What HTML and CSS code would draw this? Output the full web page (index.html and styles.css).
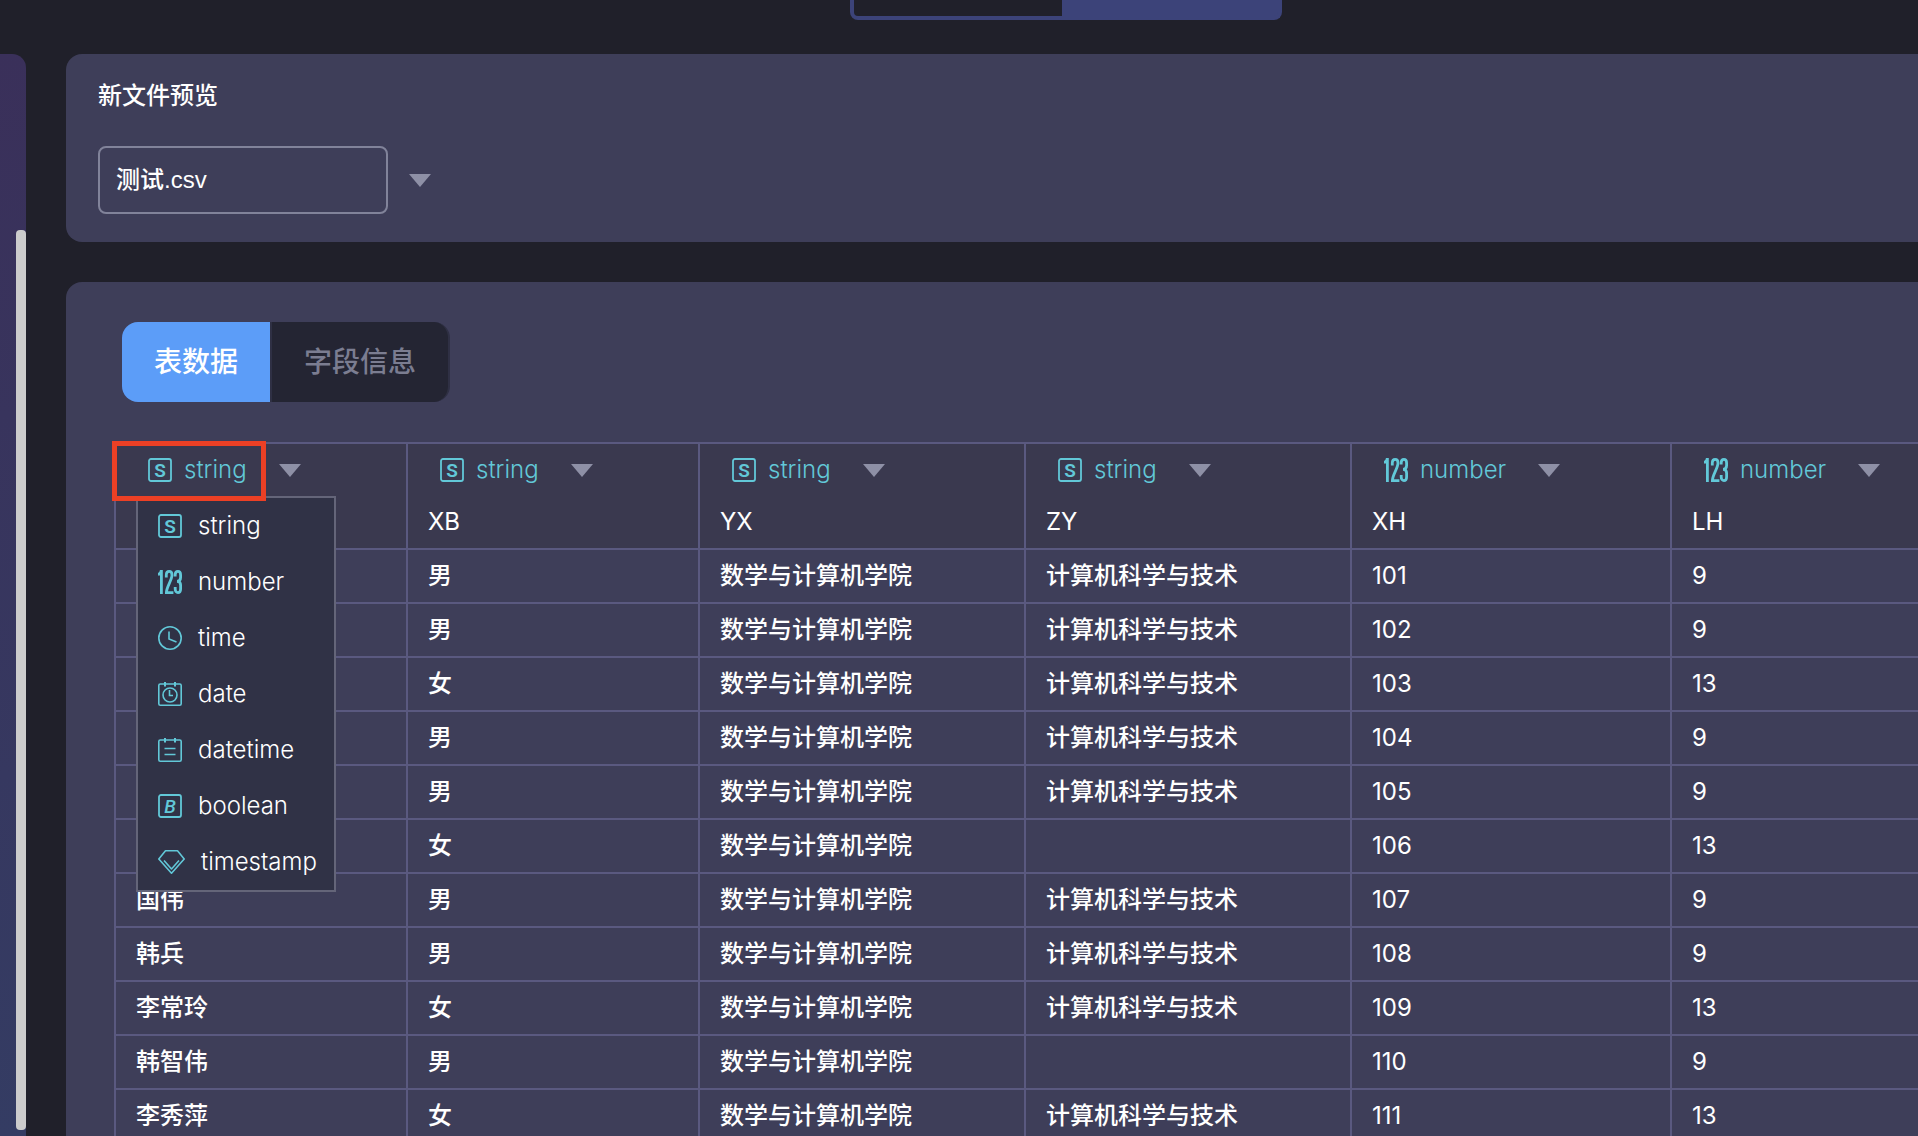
FILE: index.html
```html
<!DOCTYPE html>
<html lang="zh-CN">
<head>
<meta charset="utf-8">
<title>新文件预览</title>
<link rel="stylesheet" href="styles.css">
</head>
<body>
<svg class="sprite" aria-hidden="true">
  <symbol id="i-string" viewBox="0 0 24 24">
    <rect x="1" y="1" width="22" height="22" rx="2" fill="none" stroke="currentColor" stroke-width="1.800"/>
    <text x="12" y="19" text-anchor="middle" class="icon-letter">S</text>
  </symbol>
  <symbol id="i-number" viewBox="0 0 24 24">
    <g fill="none" stroke="currentColor" stroke-width="2.800">
      <path d="M0 4.400C2 4 3 3 3.400 0V24"/>
      <path d="M8.300 7.500V5C8.300 .2 14 .2 14 5c0 5-5.600 12-5.600 17.600h7"/>
      <path d="M17.200 6.500V5c0-4.800 5.400-4.800 5.400 0v2.500c0 2.500-1.200 3.800-3.600 3.800c2.400 0 3.600 1.300 3.600 3.800V19c0 4.800-5.400 4.800-5.400 0v-2"/>
    </g>
  </symbol>
  <symbol id="i-time" viewBox="0 0 24 24">
    <circle cx="12" cy="12" r="11.200" fill="none" stroke="currentColor" stroke-width="1.600"/>
    <path d="M11 5.500V13l7.500 3" fill="none" stroke="currentColor" stroke-width="1.600"/>
  </symbol>
  <symbol id="i-date" viewBox="0 0 24 24">
    <g fill="none" stroke="currentColor" stroke-width="1.600">
      <rect x=".8" y="2" width="22.400" height="21.200" rx="1.500"/>
      <path d="M7 0v4.500M17 0v4.500" stroke-width="2"/>
      <circle cx="12" cy="13" r="7"/>
      <path d="M11.500 8v5.500H15"/>
    </g>
  </symbol>
  <symbol id="i-datetime" viewBox="0 0 24 24">
    <g fill="none" stroke="currentColor" stroke-width="1.600">
      <rect x=".8" y="2" width="22.400" height="21.200" rx="1.500"/>
      <path d="M7 0v4.500M17 0v4.500" stroke-width="2"/>
      <path d="M6.500 10.500h11M6.500 16.500h11"/>
    </g>
  </symbol>
  <symbol id="i-boolean" viewBox="0 0 24 24">
    <rect x="1" y="1" width="22" height="22" rx="2" fill="none" stroke="currentColor" stroke-width="1.800"/>
    <text x="12" y="19" text-anchor="middle" class="icon-letter icon-letter-b">B</text>
  </symbol>
  <symbol id="i-timestamp" viewBox="0 0 27 24">
    <g fill="none" stroke="currentColor" stroke-width="1.600" stroke-linejoin="round">
      <path d="M7.500 .8h12L26.200 9 13.500 23.200.8 9z"/>
      <path d="M6 10.500l7.500 8.500L21 10.500"/>
    </g>
  </symbol>
  <symbol id="i-caret" viewBox="0 0 22 13"><path d="M0 0h22L11 13z" fill="currentColor"/></symbol>
</svg>

<aside class="side"><div class="side-thumb"></div></aside>

<main class="main">
  <div class="switch-row">
    <div class="switch"><span class="switch-off"></span><span class="switch-on"></span></div>
  </div>

  <section class="card file-card">
    <h1 class="card-title"><label for="file">新文件预览</label></h1>
    <div class="file-row">
      <select id="file" class="file-select"><option>测试.csv</option></select>
      <svg class="caret" aria-hidden="true"><use href="#i-caret"/></svg>
    </div>
  </section>

  <section class="card data-card">
    <div class="tabs" role="tablist">
      <button class="tab tab-active" role="tab" aria-selected="true">表数据</button>
      <button class="tab" role="tab" aria-selected="false">字段信息</button>
    </div>
    <table class="grid">
      <colgroup><col class="c-s"><col class="c-s"><col class="c-m"><col class="c-m"><col class="c-n"><col class="c-n"></colgroup>
      <thead>
        <tr>
          <th>
            <button class="type"><svg class="icon"><use href="#i-string"/></svg><span>string</span><svg class="caret"><use href="#i-caret"/></svg></button>
            <ul class="menu">
              <li><button class="menu-item"><svg class="icon"><use href="#i-string"/></svg>string</button></li>
              <li><button class="menu-item"><svg class="icon"><use href="#i-number"/></svg>number</button></li>
              <li><button class="menu-item"><svg class="icon"><use href="#i-time"/></svg>time</button></li>
              <li><button class="menu-item"><svg class="icon"><use href="#i-date"/></svg>date</button></li>
              <li><button class="menu-item"><svg class="icon"><use href="#i-datetime"/></svg>datetime</button></li>
              <li><button class="menu-item"><svg class="icon"><use href="#i-boolean"/></svg>boolean</button></li>
              <li><button class="menu-item"><svg class="icon icon-wide"><use href="#i-timestamp"/></svg>timestamp</button></li>
            </ul>
            <span class="marker"></span>
          </th>
          <th><button class="type"><svg class="icon"><use href="#i-string"/></svg><span>string</span><svg class="caret"><use href="#i-caret"/></svg></button><div class="name">XB</div></th>
          <th><button class="type"><svg class="icon"><use href="#i-string"/></svg><span>string</span><svg class="caret"><use href="#i-caret"/></svg></button><div class="name">YX</div></th>
          <th><button class="type"><svg class="icon"><use href="#i-string"/></svg><span>string</span><svg class="caret"><use href="#i-caret"/></svg></button><div class="name">ZY</div></th>
          <th><button class="type"><svg class="icon"><use href="#i-number"/></svg><span>number</span><svg class="caret"><use href="#i-caret"/></svg></button><div class="name">XH</div></th>
          <th><button class="type"><svg class="icon"><use href="#i-number"/></svg><span>number</span><svg class="caret"><use href="#i-caret"/></svg></button><div class="name">LH</div></th>
        </tr>
      </thead>
      <tbody>
        <tr><td></td><td>男</td><td>数学与计算机学院</td><td>计算机科学与技术</td><td>101</td><td>9</td></tr>
        <tr><td></td><td>男</td><td>数学与计算机学院</td><td>计算机科学与技术</td><td>102</td><td>9</td></tr>
        <tr><td></td><td>女</td><td>数学与计算机学院</td><td>计算机科学与技术</td><td>103</td><td>13</td></tr>
        <tr><td></td><td>男</td><td>数学与计算机学院</td><td>计算机科学与技术</td><td>104</td><td>9</td></tr>
        <tr><td></td><td>男</td><td>数学与计算机学院</td><td>计算机科学与技术</td><td>105</td><td>9</td></tr>
        <tr><td></td><td>女</td><td>数学与计算机学院</td><td></td><td>106</td><td>13</td></tr>
        <tr><td>国伟</td><td>男</td><td>数学与计算机学院</td><td>计算机科学与技术</td><td>107</td><td>9</td></tr>
        <tr><td>韩兵</td><td>男</td><td>数学与计算机学院</td><td>计算机科学与技术</td><td>108</td><td>9</td></tr>
        <tr><td>李常玲</td><td>女</td><td>数学与计算机学院</td><td>计算机科学与技术</td><td>109</td><td>13</td></tr>
        <tr><td>韩智伟</td><td>男</td><td>数学与计算机学院</td><td></td><td>110</td><td>9</td></tr>
        <tr><td>李秀萍</td><td>女</td><td>数学与计算机学院</td><td>计算机科学与技术</td><td>111</td><td>13</td></tr>
      </tbody>
    </table>
  </section>
</main>
</body>
</html>
```
FILE: styles.css
```css
* { box-sizing: border-box; }

body {
  margin: 0;
  height: 100vh;
  overflow: hidden;
  display: flex;
  gap: 40px;
  background: #20202a;
  color: #fff;
  font: 400 24px/32px Inter, "Noto Sans CJK SC", sans-serif;
}

button, select { font: inherit; color: inherit; }

button {
  padding: 0;
  border: 0;
  background: none;
  cursor: pointer;
}

.sprite { display: none; }

.icon-letter { font: 600 19px Roboto, sans-serif; fill: currentColor; }
.icon-letter-b { font: italic 500 19px Roboto, sans-serif; }

/* Left panel edge with its scrollbar */
.side {
  flex: none;
  display: flex;
  justify-content: flex-end;
  width: 26px;
  margin-top: 54px;
  padding: 176px 0 6px;
  border-radius: 0 14px 0 0;
  background: linear-gradient(#3a305a, #343c63);
}

.side-thumb { width: 10px; border-radius: 4px; background: #ccc; }

.main { flex: 1; min-width: 0; }

/* View switch */
.switch-row {
  display: flex;
  justify-content: center;
  height: 54px;
  padding-left: 148px;
}

.switch {
  display: flex;
  width: 432px;
  height: 20px;
  border: 4px solid #3c4379;
  border-top: 0;
  border-radius: 0 0 8px 8px;
  background: #3c4379;
}

.switch-off { width: 208px; border-radius: 0 0 0 4px; background: #20202a; }
.switch-on { flex: 1; }

/* Cards */
.card { border-radius: 16px 0 0 16px; background: #3e3e59; }

.file-card { padding: 26px 32px 28px; }

.card-title { margin: 0 0 34px; font-size: 24px; font-weight: 500; line-height: 32px; }

.file-row { display: flex; align-items: center; gap: 21px; }

.file-select {
  appearance: none;
  width: 290px;
  height: 68px;
  padding: 0 16px;
  border: 2px solid #81839a;
  border-radius: 8px;
  background: transparent;
  font-family: "Liberation Sans", "Noto Sans CJK SC", sans-serif;
  font-weight: 500;
}

.caret { flex: none; width: 22px; height: 13px; color: #8e90a6; }

.data-card {
  margin-top: 40px;
  padding: 40px 0 40px 48px;
  border-radius: 16px 0 0 0;
  overflow: hidden;
}

.tabs { display: flex; margin: 0 0 40px 8px; }

.tab {
  height: 80px;
  padding: 0 32px;
  border: solid #2f3044;
  border-width: 0 2px;
  border-radius: 0 16px 16px 0;
  background: #242533;
  color: #7b7d91;
  font-size: 28px;
  font-weight: 500;
}

.tab-active {
  border: 0;
  border-radius: 16px 0 0 16px;
  background: #5c9df8;
  color: #fff;
}

/* Data grid */
.grid {
  width: 1876px;
  table-layout: fixed;
  border-collapse: separate;
  border-spacing: 0;
}

.c-s { width: 292px; }
.c-m { width: 326px; }
.c-n { width: 320px; }

.grid th, .grid td {
  padding: 0 20px;
  border: solid #5a5980;
  border-width: 2px 0 0 2px;
  text-align: left;
}

.grid th {
  position: relative;
  height: 106px;
  background: #3a394f;
  font-weight: 400;
  vertical-align: top;
}

.grid td { height: 54px; }
.grid td:nth-child(-n+4) { font-weight: 500; }

.type {
  display: flex;
  align-items: center;
  height: 52px;
  padding-left: 12px;
  color: #62c8d8;
  font-weight: 300;
}

.type span { margin: 0 32px 0 12px; }

.name { line-height: 52px; }

.icon { flex: none; width: 24px; height: 24px; color: #62c8d8; }
.icon-wide { width: 27px; }

/* Type menu */
.menu {
  position: absolute;
  left: 20px;
  top: 52px;
  z-index: 1;
  width: 200px;
  margin: 0;
  padding: 0;
  border: 2px solid #646579;
  background: #303246;
  list-style: none;
}

.menu-item {
  display: flex;
  align-items: center;
  gap: 16px;
  width: 100%;
  height: 56px;
  padding: 0 0 0 20px;
  font-weight: 300;
}

/* Highlight frame around the selected type */
.marker {
  position: absolute;
  left: -4px;
  top: -3px;
  z-index: 2;
  width: 154px;
  height: 60px;
  border: 5px solid #ec4025;
  pointer-events: none;
}
```
